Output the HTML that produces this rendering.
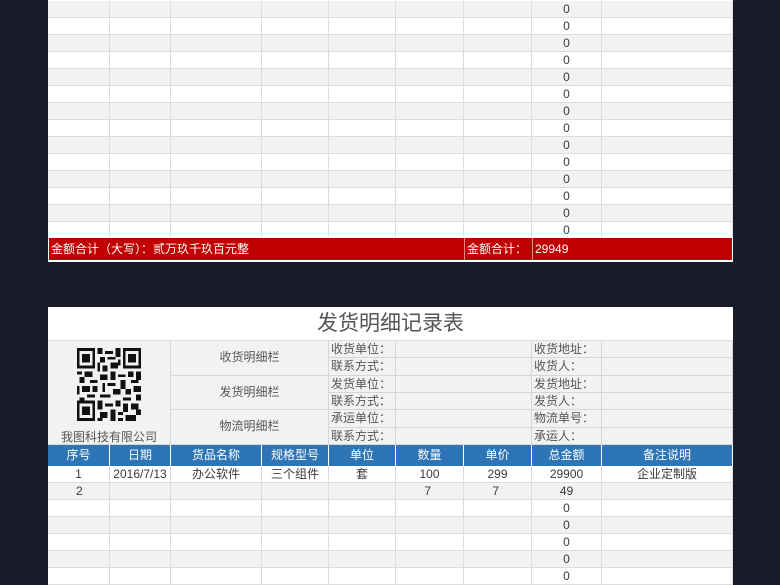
<!DOCTYPE html>
<html><head><meta charset="utf-8"><style>
*{margin:0;padding:0;box-sizing:border-box}
body{width:780px;height:585px;overflow:hidden;background:#171b2c;font-family:"Liberation Sans","Noto Sans CJK SC",sans-serif;font-size:12px;color:#3a3a3a;position:relative}
.t{position:absolute;left:48px;width:685px;background:#fff}
.r{display:flex;height:17px;border-bottom:1px solid #dcdcdc}
.r:nth-child(even){background:#f2f2f2}
.r div{border-right:1px solid #dcdcdc;text-align:center;line-height:17px;overflow:hidden;white-space:nowrap}
.c1{width:62px}.c2{width:61px}.c3{width:91px}.c4{width:67px}.c5{width:67px}.c6{width:68px}.c7{width:68px}.c8{width:70px}.c9{width:131px}
.red{position:absolute;left:48px;top:237px;width:685px;height:25px;background:#fff;padding:1px 1px 2px 1px}
.red .in{background:#c00000;height:22px;color:#fff;position:relative;line-height:22px;font-size:12px}
.p2{position:absolute;left:48px;top:307px;width:685px;height:278px;background:#fff}
.title{height:34px;text-align:center;font-size:21px;color:#555;line-height:34px;border-bottom:1px solid #dcdcdc}
.info{position:absolute;top:34px;left:0;width:685px;height:104px;background:#f2f2f2}
.cell{position:absolute;border-right:1px solid #d6d6d6;border-bottom:1px solid #d6d6d6;color:#555;font-size:12px}
.hd{position:absolute;top:138px;left:0;display:flex;height:21px;background:#2e75b6;color:#fff}
.hd div{border-right:1px solid #fff;text-align:center;line-height:21px}
.data{position:absolute;top:159px;left:0;width:685px}
</style></head><body>
<div class="t" style="top:0">
<div class="r" style="height:1px;border:none"></div>
<div class="r"><div class="c1"></div><div class="c2"></div><div class="c3"></div><div class="c4"></div><div class="c5"></div><div class="c6"></div><div class="c7"></div><div class="c8">0</div><div class="c9"></div></div>
<div class="r"><div class="c1"></div><div class="c2"></div><div class="c3"></div><div class="c4"></div><div class="c5"></div><div class="c6"></div><div class="c7"></div><div class="c8">0</div><div class="c9"></div></div>
<div class="r"><div class="c1"></div><div class="c2"></div><div class="c3"></div><div class="c4"></div><div class="c5"></div><div class="c6"></div><div class="c7"></div><div class="c8">0</div><div class="c9"></div></div>
<div class="r"><div class="c1"></div><div class="c2"></div><div class="c3"></div><div class="c4"></div><div class="c5"></div><div class="c6"></div><div class="c7"></div><div class="c8">0</div><div class="c9"></div></div>
<div class="r"><div class="c1"></div><div class="c2"></div><div class="c3"></div><div class="c4"></div><div class="c5"></div><div class="c6"></div><div class="c7"></div><div class="c8">0</div><div class="c9"></div></div>
<div class="r"><div class="c1"></div><div class="c2"></div><div class="c3"></div><div class="c4"></div><div class="c5"></div><div class="c6"></div><div class="c7"></div><div class="c8">0</div><div class="c9"></div></div>
<div class="r"><div class="c1"></div><div class="c2"></div><div class="c3"></div><div class="c4"></div><div class="c5"></div><div class="c6"></div><div class="c7"></div><div class="c8">0</div><div class="c9"></div></div>
<div class="r"><div class="c1"></div><div class="c2"></div><div class="c3"></div><div class="c4"></div><div class="c5"></div><div class="c6"></div><div class="c7"></div><div class="c8">0</div><div class="c9"></div></div>
<div class="r"><div class="c1"></div><div class="c2"></div><div class="c3"></div><div class="c4"></div><div class="c5"></div><div class="c6"></div><div class="c7"></div><div class="c8">0</div><div class="c9"></div></div>
<div class="r"><div class="c1"></div><div class="c2"></div><div class="c3"></div><div class="c4"></div><div class="c5"></div><div class="c6"></div><div class="c7"></div><div class="c8">0</div><div class="c9"></div></div>
<div class="r"><div class="c1"></div><div class="c2"></div><div class="c3"></div><div class="c4"></div><div class="c5"></div><div class="c6"></div><div class="c7"></div><div class="c8">0</div><div class="c9"></div></div>
<div class="r"><div class="c1"></div><div class="c2"></div><div class="c3"></div><div class="c4"></div><div class="c5"></div><div class="c6"></div><div class="c7"></div><div class="c8">0</div><div class="c9"></div></div>
<div class="r"><div class="c1"></div><div class="c2"></div><div class="c3"></div><div class="c4"></div><div class="c5"></div><div class="c6"></div><div class="c7"></div><div class="c8">0</div><div class="c9"></div></div>
<div class="r"><div class="c1"></div><div class="c2"></div><div class="c3"></div><div class="c4"></div><div class="c5"></div><div class="c6"></div><div class="c7"></div><div class="c8">0</div><div class="c9"></div></div>
</div>
<div class="red"><div class="in">
<span style="position:absolute;left:2px">金额合计（大写）：贰万玖千玖百元整</span>
<span style="position:absolute;left:415px;top:0;height:22px;border-left:1px solid #e88;padding-left:2px">金额合计：</span>
<span style="position:absolute;left:483px;top:0;height:22px;border-left:1px solid #e88;padding-left:2px">29949</span>
</div></div>

<div class="p2">
<div class="title">发货明细记录表</div>
<div class="info">
<div class="cell" style="left:0;top:0;width:123px;height:104px;text-align:center">
<svg style="position:absolute;left:29px;top:7px" width="64" height="73" viewBox="0 0 25 25" preserveAspectRatio="none" shape-rendering="crispEdges">
<rect width="25" height="25" fill="#f2f2f2"/>
<g fill="#111">
<path d="M0 0h7v7h-7zM18 0h7v7h-7zM0 18h7v7h-7z"/>
</g>
<g fill="#f2f2f2"><path d="M1 1h5v5h-5zM19 1h5v5h-5zM1 19h5v5h-5z"/></g>
<g fill="#111"><path d="M2 2h3v3h-3zM20 2h3v3h-3zM2 20h3v3h-3z"/>
<path d="M8 0h2v2h-2zM11 1h3v1h-3zM15 0h2v3h-2zM9 3h2v2h-2zM12 3h3v1h-3zM8 5h1v3h-1zM13 5h3v2h-3zM10 6h2v2h-2zM16 4h1v2h-1z"/>
<path d="M0 8h2v1h-2zM3 8h3v2h-3zM1 10h2v2h-2zM5 11h3v1h-3zM0 13h1v3h-1zM2 13h3v2h-3zM4 16h3v1h-3zM1 17h2v1h-2zM6 13h2v2h-2z"/>
<path d="M9 9h3v2h-3zM13 8h2v3h-2zM16 9h3v1h-3zM20 8h2v2h-2zM23 8h2v3h-2zM10 12h1v3h-1zM12 12h3v1h-3zM17 11h2v3h-2zM21 11h3v1h-3zM14 14h3v2h-3zM19 14h2v2h-2zM22 13h3v2h-3zM9 16h4v1h-4zM18 17h3v1h-3zM23 16h2v2h-2z"/>
<path d="M8 18h2v3h-2zM11 19h3v1h-3zM15 18h2v2h-2zM18 19h2v3h-2zM21 19h3v2h-3zM9 22h3v2h-3zM13 21h2v4h-2zM16 22h2v1h-2zM19 23h4v2h-4zM23 21h2v2h-2zM8 24h2v1h-2zM16 24h2v1h-2z"/>
</g></svg>
<div style="position:absolute;left:0;right:0;top:87px;font-size:12px;color:#555">我图科技有限公司</div>
</div>
<div class="cell" style="left:123px;top:0;width:158px;height:35px;text-align:center;line-height:33px">收货明细栏</div>
<div class="cell" style="left:123px;top:35px;width:158px;height:34px;text-align:center;line-height:33px">发货明细栏</div>
<div class="cell" style="left:123px;top:69px;width:158px;height:35px;text-align:center;line-height:33px">物流明细栏</div>

<div class="cell" style="left:281px;top:0;width:67px;height:17px;line-height:16px;padding-left:2px">收货单位：</div>
<div class="cell" style="left:281px;top:17px;width:67px;height:18px;line-height:16px;padding-left:2px">联系方式：</div>
<div class="cell" style="left:281px;top:35px;width:67px;height:17px;line-height:16px;padding-left:2px">发货单位：</div>
<div class="cell" style="left:281px;top:52px;width:67px;height:17px;line-height:16px;padding-left:2px">联系方式：</div>
<div class="cell" style="left:281px;top:69px;width:67px;height:18px;line-height:16px;padding-left:2px">承运单位：</div>
<div class="cell" style="left:281px;top:87px;width:67px;height:17px;line-height:16px;padding-left:2px">联系方式：</div>

<div class="cell" style="left:348px;top:0;width:136px;height:17px"></div>
<div class="cell" style="left:348px;top:17px;width:136px;height:18px"></div>
<div class="cell" style="left:348px;top:35px;width:136px;height:17px"></div>
<div class="cell" style="left:348px;top:52px;width:136px;height:17px"></div>
<div class="cell" style="left:348px;top:69px;width:136px;height:18px"></div>
<div class="cell" style="left:348px;top:87px;width:136px;height:17px"></div>

<div class="cell" style="left:484px;top:0;width:70px;height:17px;line-height:16px;padding-left:2px">收货地址：</div>
<div class="cell" style="left:484px;top:17px;width:70px;height:18px;line-height:16px;padding-left:2px">收货人：</div>
<div class="cell" style="left:484px;top:35px;width:70px;height:17px;line-height:16px;padding-left:2px">发货地址：</div>
<div class="cell" style="left:484px;top:52px;width:70px;height:17px;line-height:16px;padding-left:2px">发货人：</div>
<div class="cell" style="left:484px;top:69px;width:70px;height:18px;line-height:16px;padding-left:2px">物流单号：</div>
<div class="cell" style="left:484px;top:87px;width:70px;height:17px;line-height:16px;padding-left:2px">承运人：</div>

<div class="cell" style="left:554px;top:0;width:131px;height:17px"></div>
<div class="cell" style="left:554px;top:17px;width:131px;height:18px"></div>
<div class="cell" style="left:554px;top:35px;width:131px;height:17px"></div>
<div class="cell" style="left:554px;top:52px;width:131px;height:17px"></div>
<div class="cell" style="left:554px;top:69px;width:131px;height:18px"></div>
<div class="cell" style="left:554px;top:87px;width:131px;height:17px"></div>
</div>
<div class="hd"><div class="c1">序号</div><div class="c2">日期</div><div class="c3">货品名称</div><div class="c4">规格型号</div><div class="c5">单位</div><div class="c6">数量</div><div class="c7">单价</div><div class="c8">总金额</div><div class="c9">备注说明</div></div>
<div class="data t" style="left:0;top:159px">
<div class="r" style="background:#fff"><div class="c1">1</div><div class="c2">2016/7/13</div><div class="c3">办公软件</div><div class="c4">三个组件</div><div class="c5">套</div><div class="c6">100</div><div class="c7">299</div><div class="c8">29900</div><div class="c9">企业定制版</div></div>
<div class="r"><div class="c1" style="text-align:left;padding-left:28px">2</div><div class="c2"></div><div class="c3"></div><div class="c4"></div><div class="c5"></div><div class="c6" style="text-align:right;padding-right:32px">7</div><div class="c7" style="text-align:right;padding-right:32px">7</div><div class="c8">49</div><div class="c9"></div></div>
<div class="r" style="background:#fff"><div class="c1"></div><div class="c2"></div><div class="c3"></div><div class="c4"></div><div class="c5"></div><div class="c6"></div><div class="c7"></div><div class="c8">0</div><div class="c9"></div></div>
<div class="r"><div class="c1"></div><div class="c2"></div><div class="c3"></div><div class="c4"></div><div class="c5"></div><div class="c6"></div><div class="c7"></div><div class="c8">0</div><div class="c9"></div></div>
<div class="r" style="background:#fff"><div class="c1"></div><div class="c2"></div><div class="c3"></div><div class="c4"></div><div class="c5"></div><div class="c6"></div><div class="c7"></div><div class="c8">0</div><div class="c9"></div></div>
<div class="r"><div class="c1"></div><div class="c2"></div><div class="c3"></div><div class="c4"></div><div class="c5"></div><div class="c6"></div><div class="c7"></div><div class="c8">0</div><div class="c9"></div></div>
<div class="r" style="background:#fff"><div class="c1"></div><div class="c2"></div><div class="c3"></div><div class="c4"></div><div class="c5"></div><div class="c6"></div><div class="c7"></div><div class="c8">0</div><div class="c9"></div></div>
</div>
</div>
</body></html>
